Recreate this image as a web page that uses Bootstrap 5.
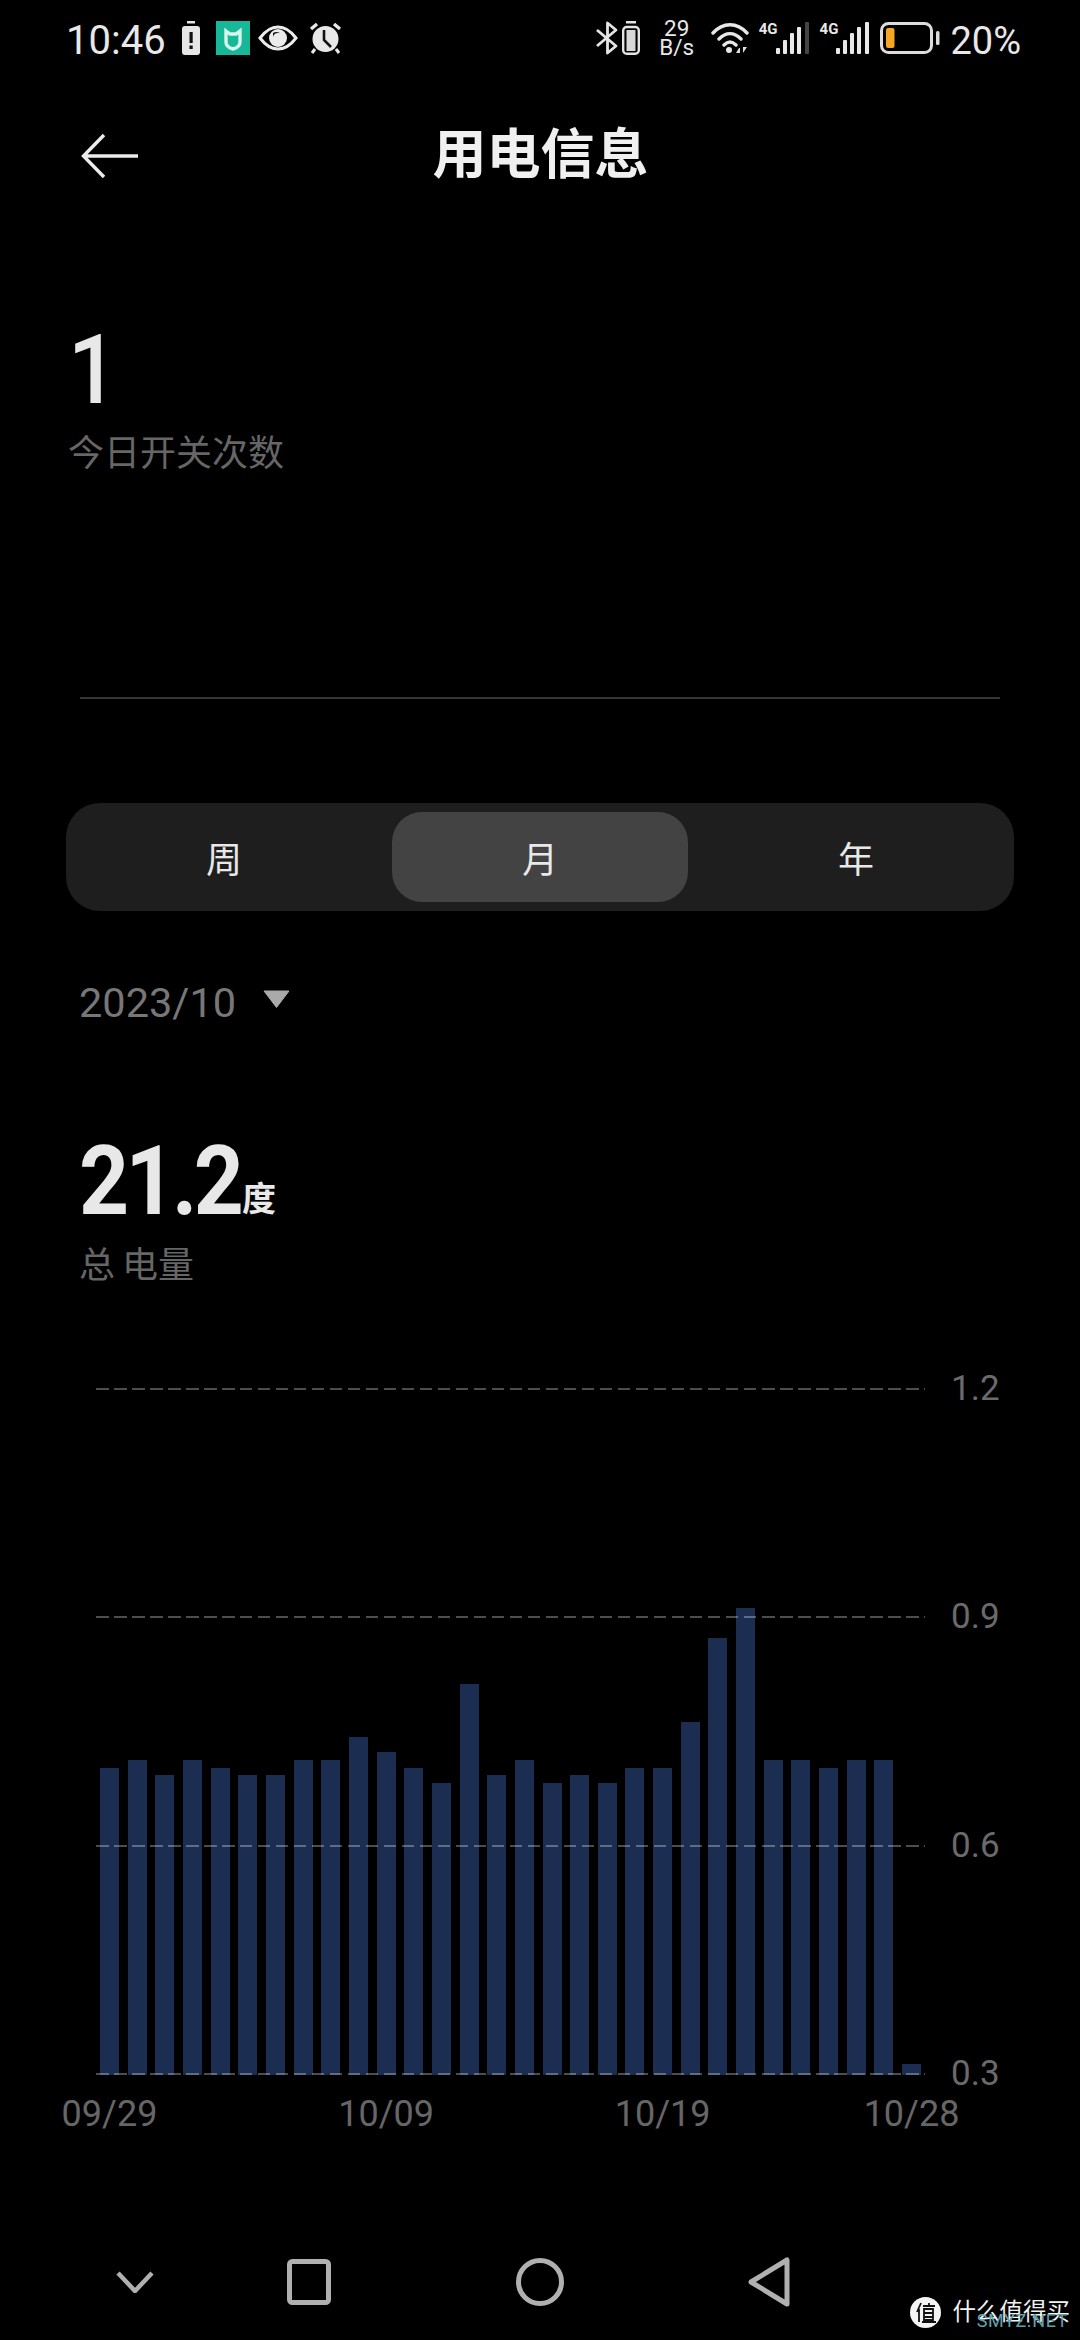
<!DOCTYPE html>
<html lang="zh-CN">
<head>
    <meta charset="UTF-8">
    <meta name="viewport" content="width=device-width, initial-scale=1.0">
    <title>用电信息</title>
    <link href="https://cdn.jsdelivr.net/npm/bootstrap@5.3.0/dist/css/bootstrap.min.css" rel="stylesheet">
    <style>
        body {
            background: #000;
            color: #e8e8e8;
            font-family: Roboto, "Noto Sans CJK SC", sans-serif;
        }

        .phone-screen {
            width: 1080px;
            height: 2340px;
            overflow: hidden;
        }

        /* status bar */
        .status-bar {
            height: 76px;
            padding: 0 59px 0 66px;
        }

        .status-time {
            font-size: 40px;
            line-height: 1;
            margin-right: 16px;
            margin-top: 5px;
        }

        .icon-mi { margin-left: 16px; }
        .icon-eye { margin-left: 8px; }
        .icon-alarm { margin-left: 11px; }
        .icon-phone-batt { margin-left: 4px; }
        .icon-signal { margin-left: -2px; }
        .icon-battery { margin-left: 10px; }

        .net-speed {
            width: 36px;
            margin: 0 16px 0 19px;
            font-size: 22.5px;
            line-height: 19px;
            text-align: center;
        }

        .sim-tag {
            font-size: 15px;
            font-weight: 700;
            line-height: 1;
            margin: -18px 0 0 10px;
        }

        .battery-pct {
            font-size: 38px;
            line-height: 1;
            margin: 5px 0 0 10px;
        }

        /* header */
        .title-row {
            display: grid;
            grid-template-columns: 1fr auto 1fr;
            height: 154px;
            padding: 6px 0 0 81px;
        }

        .page-title {
            font-size: 54px;
            font-weight: 700;
            line-height: 1;
            margin-left: -80px;
            color: #f0f0f0;
        }

        /* stats */
        .big-num {
            font-size: 97px;
            font-weight: 500;
            line-height: 70px;
            letter-spacing: -4px;
            color: #e8e8e8;
            transform: scaleX(.9);
            transform-origin: left center;
        }

        .stat-label {
            font-size: 36px;
            line-height: 40px;
            color: #666;
        }

        .today-stat {
            padding: 105px 0 0 68px;
        }

        .today-stat .stat-label {
            margin-top: 29px;
        }

        .stat-rule {
            height: 2px;
            background: #363636;
            margin: 223px 80px 0;
        }

        /* week month year switch */
        .period-tabs {
            margin: 104px 66px 0;
            height: 108px;
            background: #1e1e1e;
            border-radius: 34px;
        }

        .period-tabs .nav-link {
            height: 108px;
            color: #e8e8e8;
            font-size: 36px;
            line-height: 116px;
            padding: 0;
        }

        .period-tabs .nav-link.active {
            width: calc(100% - 20px);
            height: 90px;
            margin: 9px 10px;
            line-height: 98px;
            color: #e8e8e8;
            background: #434343;
            border-radius: 30px;
        }

        .month-pick {
            margin: 68px 0 0 79px;
            font-size: 41.5px;
            line-height: 48px;
            color: #777;
        }

        .month-pick svg {
            margin: -8px 0 0 27px;
        }

        .total-stat {
            padding: 119px 0 0 79px;
        }

        .total-value {
            height: 70px;
        }

        .total-value .big-num {
            font-weight: 700;
        }

        .total-unit {
            font-size: 34px;
            font-weight: 700;
            line-height: 1;
            margin-left: -16px;
            color: #e8e8e8;
        }

        .total-stat .stat-label {
            margin-top: 30px;
            word-spacing: -2px;
        }

        /* chart */
        .power-chart {
            margin: 102px 0 0 96px;
            width: 920px;
        }

        .grid-row {
            height: 2px;
            margin-bottom: 226.4px;
        }

        .grid-row:last-child {
            margin-bottom: 0;
        }

        .grid-line {
            width: 829px;
            height: 2px;
            background: repeating-linear-gradient(90deg, rgba(255, 255, 255, .3) 0 12.5px, transparent 12.5px 18px);
        }

        .grid-value {
            margin-left: 26px;
            font-size: 35px;
            line-height: 2px;
            color: #6a6a6a;
        }

        .bars-layer {
            left: 4px;
            bottom: 0;
            top: 0;
            display: grid;
            grid-template-columns: repeat(30, 19px);
            column-gap: 8.66px;
            align-items: end;
            z-index: -1;
        }

        .bar-item {
            background: #1b2d50;
        }

        .chart-plot {
            z-index: 0;
        }

        .axis-dates {
            margin: 19px 0 0 4px;
            display: grid;
            grid-template-columns: repeat(30, 19px);
            column-gap: 8.66px;
            font-size: 36px;
            line-height: 40px;
            color: #666;
        }

        .axis-date {
            display: flex;
            justify-content: center;
            white-space: nowrap;
        }

        /* nav keys */
        .nav-keys {
            margin-top: 123px;
            padding-left: 116px;
            height: 50px;
        }

        .key-back { margin-left: 133px; }
        .key-home { margin-left: 185px; }
        .key-recent { margin-left: 184px; }

        .site-mark {
            right: 10px;
            bottom: 12px;
            color: #f2f2f2;
            font-size: 23.5px;
            line-height: 32px;
        }

        .site-mark-name {
            margin-left: 12px;
        }

        .site-mark-sub {
            right: 12px;
            bottom: 12px;
            font-size: 18px;
            line-height: 14px;
            letter-spacing: .6px;
            color: #63a0ae;
        }
    </style>
</head>
<body>
    <div class="phone-screen position-relative">
        <!-- status bar -->
        <div class="status-bar d-flex align-items-center justify-content-between">
            <div class="d-flex align-items-center">
                <span class="status-time">10:46</span>
                <svg width="18" height="34" viewBox="0 0 18 34"><rect x="5" y="0" width="8" height="2.5" fill="#e6e6e6"/><rect x="0" y="5" width="18" height="29" rx="3" fill="#e6e6e6"/><rect x="7.5" y="11" width="3.2" height="11" fill="#111"/><rect x="7.5" y="24.5" width="3.2" height="3.5" fill="#111"/></svg>
                <svg class="icon-mi" width="34" height="34" viewBox="0 0 34 34"><rect width="34" height="34" fill="#17b897"/><path d="M10 10l4 3h6l4-3v11c0 4-3 6-7 7-4-1-7-3-7-7z" fill="none" stroke="#d8f5ee" stroke-width="3.4"/></svg>
                <svg class="icon-eye" width="40" height="26" viewBox="0 0 40 26"><path d="M2 13C8 5 14 2 20 2s12 3 18 11c-6 8-12 11-18 11S8 21 2 13z" fill="none" stroke="#ececec" stroke-width="3"/><circle cx="20" cy="13" r="9" fill="#ececec"/><path d="M15 8a7 7 0 0 1 8 1 5 5 0 0 0-8 3z" fill="#111"/></svg>
                <svg class="icon-alarm" width="33" height="32" viewBox="0 0 33 32"><circle cx="16.5" cy="17" r="13" fill="#e8e8e8"/><path d="M15 8v10l7 7" fill="none" stroke="#111" stroke-width="2.6"/><path d="M2 7l6-5M31 7l-6-5" stroke="#e8e8e8" stroke-width="3.4"/><path d="M6 27l-3 4M27 27l3 4" stroke="#e8e8e8" stroke-width="3"/></svg>
            </div>
            <div class="d-flex align-items-center">
                <svg width="22" height="34" viewBox="0 0 22 34"><path d="M1 9l19 16-8.5 7V2L20 9 1 25" fill="none" stroke="#e4e4e4" stroke-width="2.8" stroke-linejoin="round"/></svg>
                <svg class="icon-phone-batt" width="18" height="34" viewBox="0 0 18 34"><rect x="4" y="0" width="10" height="2.5" fill="#e4e4e4"/><rect x="1.2" y="6" width="15.6" height="26.8" rx="3.5" fill="none" stroke="#e4e4e4" stroke-width="2.4"/><rect x="4.5" y="9" width="9" height="21" fill="#d8d8d8"/></svg>
                <div class="net-speed">29<br>B/s</div>
                <svg width="38" height="32" viewBox="0 0 38 32"><path d="M2 11C12 0 26 0 36 11M8 17c7-7 15-7 22 0M13 23c4-4 8-4 12 0" fill="none" stroke="#e8e8e8" stroke-width="3.4" stroke-linecap="round"/><circle cx="18" cy="28" r="3" fill="#e8e8e8"/><path d="M25 31l3-5h1v5zM32 25v6l4-6z" fill="#ddd"/></svg>
                <span class="sim-tag">4G</span>
                <svg class="icon-signal" width="34" height="32" viewBox="0 0 34 32"><g fill="#e8e8e8"><rect x="0" y="26" width="4" height="6" rx="1"/><rect x="7" y="18" width="4" height="14" rx="1"/><rect x="14" y="11" width="4" height="21" rx="1"/><rect x="21" y="5" width="4" height="27" rx="1"/></g><rect x="29" y="0" width="4" height="32" rx="1" fill="#444"/></svg>
                <span class="sim-tag">4G</span>
                <svg class="icon-signal" width="34" height="32" viewBox="0 0 34 32"><g fill="#e8e8e8"><rect x="0" y="26" width="4" height="6" rx="1"/><rect x="7" y="18" width="4" height="14" rx="1"/><rect x="14" y="11" width="4" height="21" rx="1"/><rect x="21" y="5" width="4" height="27" rx="1"/><rect x="29" y="0" width="4" height="32" rx="1"/></g></svg>
                <svg class="icon-battery" width="60" height="32" viewBox="0 0 60 32"><rect x="1.5" y="1.5" width="50" height="29" rx="7" fill="none" stroke="#dcdcdc" stroke-width="3"/><rect x="6" y="6" width="8.5" height="20" rx="2" fill="#f5a623"/><rect x="56" y="9" width="3.5" height="14" rx="1.5" fill="#dcdcdc"/></svg>
                <span class="battery-pct">20%</span>
            </div>
        </div>

        <!-- header -->
        <div class="title-row align-items-center">
            <svg width="58" height="46" viewBox="0 0 58 46"><path d="M57 23H3M23 2L2.5 23 23 44" fill="none" stroke="#ececec" stroke-width="3.4"/></svg>
            <div class="page-title">用电信息</div>
            <div></div>
        </div>

        <!-- today count -->
        <div class="today-stat">
            <div class="big-num">1</div>
            <div class="stat-label">今日开关次数</div>
        </div>
        <div class="stat-rule"></div>

        <!-- period switch -->
        <ul class="nav nav-pills nav-justified period-tabs">
            <li class="nav-item"><a class="nav-link" href="#">周</a></li>
            <li class="nav-item"><a class="nav-link active" href="#">月</a></li>
            <li class="nav-item"><a class="nav-link" href="#">年</a></li>
        </ul>

        <div class="month-pick d-flex align-items-center">
            <span>2023/10</span>
            <svg width="27" height="18" viewBox="0 0 27 18"><path d="M1 1h25L13.5 17.5z" fill="#aaa" stroke="#aaa" stroke-linejoin="round"/></svg>
        </div>

        <!-- total -->
        <div class="total-stat">
            <div class="total-value d-flex align-items-end">
                <span class="big-num">21.2</span>
                <span class="total-unit">度</span>
            </div>
            <div class="stat-label">总 电量</div>
        </div>

        <!-- chart -->
        <div class="power-chart">
            <div class="chart-plot position-relative" id="chartPlot"></div>
            <div class="axis-dates" id="axisDates"></div>
        </div>

        <!-- navigation keys -->
        <div class="nav-keys d-flex align-items-center">
            <svg width="38" height="22" viewBox="0 0 38 22"><path d="M2 2l17 18L36 2" fill="none" stroke="#b0b0b0" stroke-width="4.5"/></svg>
            <svg class="key-back" width="44" height="46" viewBox="0 0 44 46"><rect x="2.5" y="2.5" width="39" height="41" rx="3" fill="none" stroke="#b0b0b0" stroke-width="5"/></svg>
            <svg class="key-home" width="48" height="50" viewBox="0 0 48 50"><circle cx="24" cy="25" r="21.5" fill="none" stroke="#b0b0b0" stroke-width="5"/></svg>
            <svg class="key-recent" width="42" height="50" viewBox="0 0 42 50"><path d="M39 3v44L3 25z" fill="none" stroke="#b0b0b0" stroke-width="5" stroke-linejoin="round"/></svg>
        </div>

        <!-- watermark -->
        <div class="site-mark position-absolute d-flex align-items-center">
            <svg width="31" height="31" viewBox="0 0 31 31"><circle cx="15.5" cy="15.5" r="15.5" fill="#f4f4f4"/><path d="M11 6l-4 9M9 12v13M13 9h12M19 6v4M14 12h9v11h-9zM14 16h9M14 20h9M12 25h14" fill="none" stroke="#111" stroke-width="1.8"/></svg>
            <span class="site-mark-name">什么值得买</span>
        </div>
        <div class="site-mark-sub position-absolute">SMYZ.NET</div>
    </div>

    <script src="https://cdn.jsdelivr.net/npm/bootstrap@5.3.0/dist/js/bootstrap.bundle.min.js"></script>
    <script>
        // daily usage, 09/29 to 10/28
        const usage = [0.70, 0.71, 0.69, 0.71, 0.70, 0.69, 0.69, 0.71, 0.71, 0.74,
            0.72, 0.70, 0.68, 0.81, 0.69, 0.71, 0.68, 0.69, 0.68, 0.70,
            0.70, 0.76, 0.87, 0.91, 0.71, 0.71, 0.70, 0.71, 0.71, 0.31];
        const ticks = ['1.2', '0.9', '0.6', '0.3'];
        const dates = { 1: '09/29', 11: '10/09', 21: '10/19', 30: '10/28' };
        const pxPerUnit = 761; // 0.3 is 228px tall

        const plot = document.getElementById('chartPlot');
        plot.innerHTML = `<div class="bars-layer position-absolute">${usage.map(v =>
            `<div class="bar-item" style="height:${Math.round((v - 0.3) * pxPerUnit) + 3}px"></div>`
        ).join('')}</div>` + ticks.map(t =>
            `<div class="grid-row d-flex align-items-center"><div class="grid-line"></div><span class="grid-value">${t}</span></div>`
        ).join('');

        document.getElementById('axisDates').innerHTML = Object.keys(dates).map(i =>
            `<span class="axis-date" style="grid-column:${i}">${dates[i]}</span>`
        ).join('');
    </script>
</body>
</html>
